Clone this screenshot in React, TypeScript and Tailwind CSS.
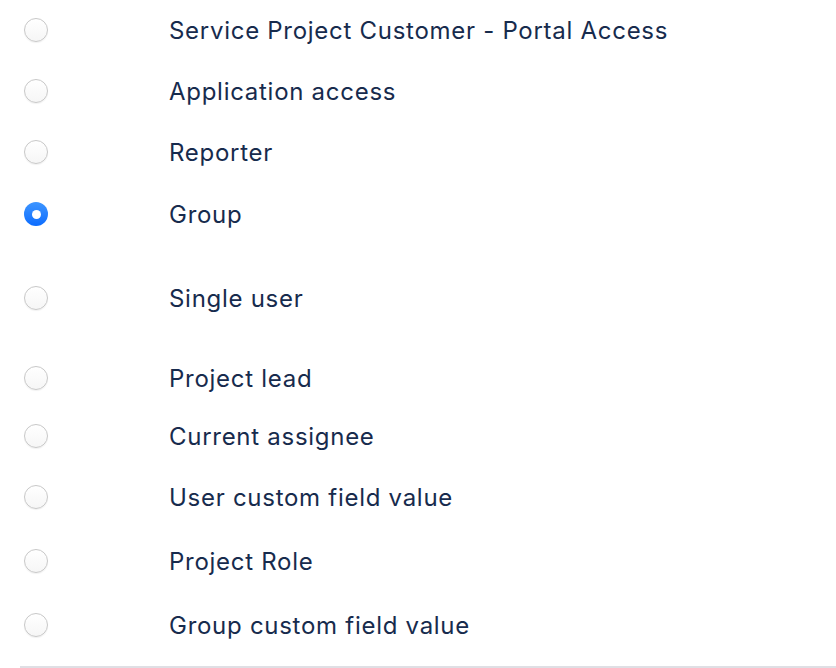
const rows: { label: string; gap: string; checked?: boolean }[] = [
  { label: 'Service Project Customer - Portal Access', gap: 'mt-[18px]' },
  { label: 'Application access', gap: 'mt-[37px]' },
  { label: 'Reporter', gap: 'mt-[37px]' },
  { label: 'Group', gap: 'mt-[38px]', checked: true },
  { label: 'Single user', gap: 'mt-[60px]' },
  { label: 'Project lead', gap: 'mt-[56px]' },
  { label: 'Current assignee', gap: 'mt-[34px]' },
  { label: 'User custom field value', gap: 'mt-[37px]' },
  { label: 'Project Role', gap: 'mt-[40px]' },
  { label: 'Group custom field value', gap: 'mt-[40px]' },
];

const Radio = ({ checked }: { checked?: boolean }) =>
  checked ? (
    <span className="flex h-[24px] w-[24px] items-center justify-center rounded-full bg-gradient-to-b from-[#3d95ff] to-[#0a6cff]">
      <span className="h-[9px] w-[9px] rounded-full bg-white" />
    </span>
  ) : (
    <span className="h-[24px] w-[24px] rounded-full border border-[#c8c8c8] bg-gradient-to-b from-white to-[#f6f6f6] shadow-[0_1px_1px_rgba(0,0,0,0.06)]" />
  );

export default function App() {
  return (
    <div className="min-h-[668px] w-[836px] bg-white font-['Inter',sans-serif] text-[#172b4d]">
      <div className="flex flex-col">
        {rows.map(row => (
          <label key={row.label} className={`${row.gap} flex h-[24px] items-center`}>
            <span className="ml-[24px] flex w-[145px]">
              <Radio checked={row.checked} />
            </span>
            <span className="pt-[2px] text-[24px] leading-none tracking-[0.72px]">{row.label}</span>
          </label>
        ))}
      </div>
      <div className="ml-[20px] mt-[29px] h-[2px] bg-[#dfdfe4]" />
    </div>
  );
}
